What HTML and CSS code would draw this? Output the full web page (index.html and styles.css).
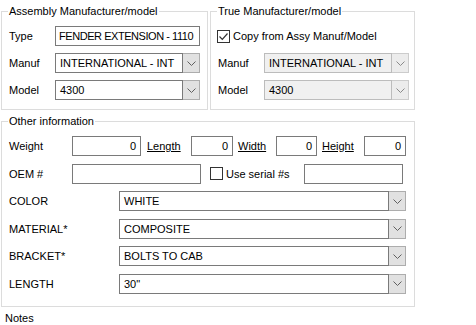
FILE: index.html
```html
<!DOCTYPE html>
<html lang="en">
<head>
<meta charset="utf-8">
<title>Part details</title>
<link rel="stylesheet" href="styles.css">
</head>
<body>
<div class="top">
  <fieldset class="group assy">
    <legend>Assembly Manufacturer/model</legend>
    <div class="row">
      <span class="lbl">Type</span>
      <div class="field wide tight">FENDER EXTENSION - 1110</div>
    </div>
    <div class="row">
      <span class="lbl">Manuf</span>
      <div class="combo wide"><span class="val">INTERNATIONAL - INT</span><span class="btn"><svg width="9" height="5" viewBox="0 0 9 5"><path d="M0.5 0.5 L4.5 4.5 L8.5 0.5" fill="none" stroke="#606060" stroke-width="1"/></svg></span></div>
    </div>
    <div class="row">
      <span class="lbl">Model</span>
      <div class="combo wide"><span class="val">4300</span><span class="btn"><svg width="9" height="5" viewBox="0 0 9 5"><path d="M0.5 0.5 L4.5 4.5 L8.5 0.5" fill="none" stroke="#606060" stroke-width="1"/></svg></span></div>
    </div>
  </fieldset>
  <fieldset class="group true">
    <legend>True Manufacturer/model</legend>
    <div class="row">
      <span class="check on"><svg width="11" height="11" viewBox="0 0 11 11"><path d="M1.5 5.5 L4.3 8.3 L9.5 2.5" fill="none" stroke="#333" stroke-width="1.2"/></svg></span>
      <span class="chklbl">Copy from Assy Manuf/Model</span>
    </div>
    <div class="row">
      <span class="lbl lbl-true">Manuf</span>
      <div class="combo off wide"><span class="val">INTERNATIONAL - INT</span><span class="btn"><svg width="9" height="5" viewBox="0 0 9 5"><path d="M0.5 0.5 L4.5 4.5 L8.5 0.5" fill="none" stroke="#8a8a8a" stroke-width="1"/></svg></span></div>
    </div>
    <div class="row">
      <span class="lbl lbl-true">Model</span>
      <div class="combo off wide"><span class="val">4300</span><span class="btn"><svg width="9" height="5" viewBox="0 0 9 5"><path d="M0.5 0.5 L4.5 4.5 L8.5 0.5" fill="none" stroke="#8a8a8a" stroke-width="1"/></svg></span></div>
    </div>
  </fieldset>
</div>

<fieldset class="group other">
  <legend>Other information</legend>
  <div class="row">
    <span class="lbl lbl-o">Weight</span>
    <div class="field num w-weight">0</div>
    <a class="link l-length">Length</a>
    <div class="field num w-length">0</div>
    <a class="link l-width">Width</a>
    <div class="field num w-width">0</div>
    <a class="link l-height">Height</a>
    <div class="field num w-height">0</div>
  </div>
  <div class="row">
    <span class="lbl lbl-o">OEM #</span>
    <div class="field w-oem"></div>
    <span class="check serial"></span>
    <span class="chklbl serial-lbl">Use serial #s</span>
    <div class="field w-serial"></div>
  </div>
  <div class="row">
    <span class="lbl lbl-c">COLOR</span>
    <div class="combo long"><span class="val">WHITE</span><span class="btn"><svg width="9" height="5" viewBox="0 0 9 5"><path d="M0.5 0.5 L4.5 4.5 L8.5 0.5" fill="none" stroke="#606060" stroke-width="1"/></svg></span></div>
  </div>
  <div class="row">
    <span class="lbl lbl-c">MATERIAL*</span>
    <div class="combo long"><span class="val">COMPOSITE</span><span class="btn"><svg width="9" height="5" viewBox="0 0 9 5"><path d="M0.5 0.5 L4.5 4.5 L8.5 0.5" fill="none" stroke="#606060" stroke-width="1"/></svg></span></div>
  </div>
  <div class="row">
    <span class="lbl lbl-c">BRACKET*</span>
    <div class="combo long"><span class="val">BOLTS TO CAB</span><span class="btn"><svg width="9" height="5" viewBox="0 0 9 5"><path d="M0.5 0.5 L4.5 4.5 L8.5 0.5" fill="none" stroke="#606060" stroke-width="1"/></svg></span></div>
  </div>
  <div class="row">
    <span class="lbl lbl-c">LENGTH</span>
    <div class="combo long"><span class="val">30"</span><span class="btn"><svg width="9" height="5" viewBox="0 0 9 5"><path d="M0.5 0.5 L4.5 4.5 L8.5 0.5" fill="none" stroke="#606060" stroke-width="1"/></svg></span></div>
  </div>
</fieldset>

<div class="notes">Notes</div>
</body>
</html>
```

FILE: styles.css
```css
body {
  margin: 0;
  padding: 4px 0 0 1px;
  background: #ffffff;
  font-family: "Liberation Sans", Arial, sans-serif;
  font-size: 11px;
  color: #000000;
  width: 476px;
  height: 325px;
  overflow: hidden;
  box-sizing: border-box;
}

.top {
  display: flex;
  gap: 2px;
  width: 414px;
}

.group {
  margin: 0;
  border: 1px solid #dcdcdc;
  padding: 8px 8px 9px 6px;
  min-width: 0;
  box-sizing: border-box;
  display: flex;
  flex-direction: column;
  gap: 7px;
}

.group legend {
  padding: 0 1px;
  line-height: 14px;
  margin-left: 0;
}

.assy {
  width: 207px;
}

.true {
  width: 205px;
}

.other {
  margin-top: 4px;
  width: 414px;
  padding: 8px 9px 12px 6px;
  gap: 7.6px;
}

.row {
  display: flex;
  align-items: center;
  height: 20px;
}

.lbl {
  width: 46px;
  flex: none;
  padding-left: 1px;
}

.lbl-o {
  width: 63px;
}

.lbl-c {
  width: 110px;
}

.field {
  height: 20px;
  box-sizing: border-box;
  border: 1px solid #7a7a7a;
  background: #ffffff;
  padding: 0 4px;
  line-height: 18px;
  white-space: nowrap;
  overflow: hidden;
  flex: none;
}

.field.tight {
  padding: 0 3px;
  letter-spacing: -0.45px;
}

.field.num {
  text-align: right;
}

.wide {
  width: 145px;
}

.combo {
  height: 20px;
  box-sizing: border-box;
  display: flex;
  flex: none;
}

.combo .val {
  flex: 1;
  border: 1px solid #7a7a7a;
  background: #ffffff;
  padding: 0 4px;
  line-height: 18px;
  white-space: nowrap;
  overflow: hidden;
}

.combo .btn {
  width: 17px;
  flex: none;
  box-sizing: border-box;
  border: 1px solid #adadad;
  border-left: none;
  background: #e1e1e1;
  display: flex;
  align-items: center;
  justify-content: center;
}

.combo.off .val {
  background: #f0f0f0;
  border-color: #bcbcbc;
}

.combo.off .btn {
  background: #ececec;
  border-color: #cccccc;
}

.long {
  width: 287px;
}

.check {
  width: 13px;
  height: 13px;
  box-sizing: border-box;
  border: 1px solid #333333;
  background: #ffffff;
  display: flex;
  align-items: center;
  justify-content: center;
  flex: none;
}

.chklbl {
  margin-left: 3px;
}

.link {
  color: #000000;
  text-decoration: underline;
  flex: none;
  padding-left: 1px;
}

.w-weight { width: 69px; }
.l-length { margin-left: 5px; width: 44px; }
.w-length { width: 42px; }
.l-width { margin-left: 4px; width: 38px; }
.w-width { width: 41px; }
.l-height { margin-left: 4px; width: 42px; }
.w-height { width: 42px; }

.w-oem { width: 129px; }
.serial { margin-left: 9px; }
.serial-lbl { width: 78px; }
.w-serial { width: 99px; }

.notes {
  margin-top: 4px;
  padding-left: 4px;
  line-height: 14px;
}
```
